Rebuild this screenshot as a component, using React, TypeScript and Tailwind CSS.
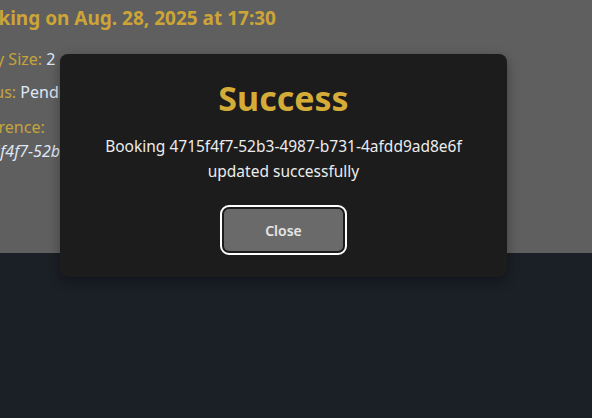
import React from "react";

export default function App() {
  const [open, setOpen] = React.useState(true);

  return (
    <div className="relative h-[418px] w-[592px] overflow-hidden bg-[#1b1f26] font-['Noto_Sans',sans-serif]">
      {/* Booking detail behind the dialog */}
      <div className="h-[253px] bg-[#5f5f5f]">
        <div className="-ml-[38px] pt-[4px]">
          <h2 className="text-[19px] font-bold leading-[28px] text-[#cda536]">
            Booking on Aug. 28, 2025 at 17:30
          </h2>
          <div className="mt-[15px] flex flex-col gap-[9px] pl-[3px] text-[16px] leading-[24px]">
            <p>
              <span className="text-[#c6a43c]">Party Size:</span>{" "}
              <span className="text-[#dfe8f6]">2</span>
            </p>
            <p>
              <span className="text-[#c6a43c]">Status:</span>{" "}
              <span className="text-[#dfe8f6]">Pending</span>
            </p>
            <div className="mt-[2px]">
              <p className="text-[#c6a43c]">Reference:</p>
              <p className="italic text-[#dfe8f6]">
                4715f4f7-52b3-4987-b731-4afdd9ad8e6f
              </p>
            </div>
          </div>
        </div>
      </div>

      {/* Success dialog */}
      {open && (
        <div className="absolute left-[60px] top-[54px] flex w-[447px] flex-col items-center rounded-[8px] bg-[#1c1c1c] px-6 pb-[26px] pt-[22px] shadow-[0_4px_12px_rgba(0,0,0,0.35)]">
          <h1 className="text-[34px] font-bold leading-[44px] text-[#d4ac37]">
            Success
          </h1>
          <p className="mt-[14px] text-center text-[15.5px] leading-[25px] text-[#ececec]">
            Booking 4715f4f7-52b3-4987-b731-4afdd9ad8e6f
            <br />
            updated successfully
          </p>
          <button
            onClick={() => setOpen(false)}
            className="mt-[25px] h-[42px] w-[119px] rounded-[5px] bg-[#6a6a6a] text-[14px] font-semibold text-[#e6e6e6] outline-2 outline-offset-2 outline-white outline"
          >
            Close
          </button>
        </div>
      )}
    </div>
  );
}
